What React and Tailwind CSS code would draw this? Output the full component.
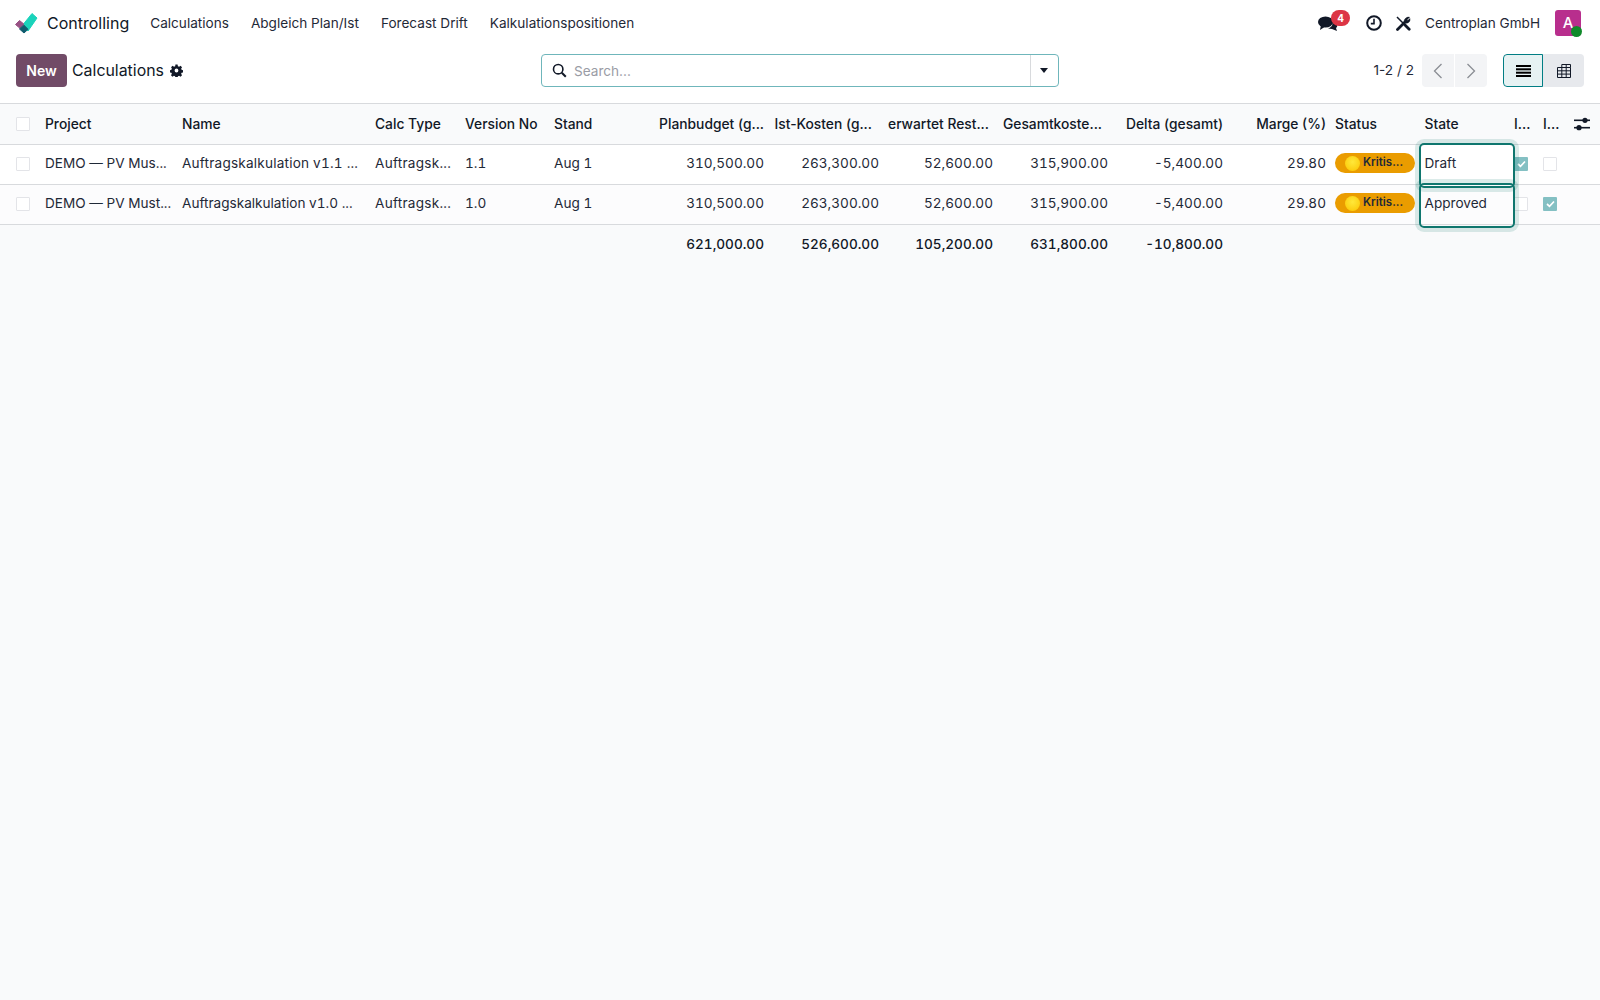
import React from "react";

const font = { fontFamily: "Inter, 'Noto Sans', sans-serif" };

function Logo() {
  return (
    <svg width="24" height="22" viewBox="0 0 24 22">
      <path d="M8.5 12 L17 1.5 L22 6 L13 19 Z" fill="#1ad3bb" stroke="#1ad3bb" strokeWidth="1" strokeLinejoin="round" />
      <path d="M0.5 12.5 L4.5 8.5 L8.8 12 L5 16.3 Z" fill="#985184" stroke="#985184" strokeWidth="1" strokeLinejoin="round" />
      <path d="M4.5 17 L8.8 13 L13 17.3 L9 21 Z" fill="#0f5c6e" stroke="#0f5c6e" strokeWidth="1" strokeLinejoin="round" />
    </svg>
  );
}

function Check({ on }) {
  return on ? (
    <span className="flex h-[14px] w-[14px] items-center justify-center rounded-[1px] bg-[#84c0c3]">
      <svg width="9" height="8" viewBox="0 0 9 8"><path d="M1 4 L3.5 6.3 L8 1.5" fill="none" stroke="#fff" strokeWidth="1.7" /></svg>
    </span>
  ) : (
    <span className="block h-[14px] w-[14px] rounded-[1px] border border-[#e3e4e8] bg-white" />
  );
}

function Badge() {
  return (
    <span className="flex h-[20px] w-[80px] items-center rounded-full bg-[#ea9c00] pl-[10px] text-[11.5px] font-semibold text-[#1f2937]">
      <span className="mr-[3px] h-[15px] w-[15px] rounded-full bg-[radial-gradient(circle_at_50%_40%,#ffe83a,#fbc400)]" />
      Kritis...
    </span>
  );
}

const cols = [37, 137, 193, 90, 89, 91, 135, 115, 114, 115, 115, 96, 89.5, 97.5, 29, 29, 28];
const rows = [
  { p: "DEMO — PV Mus...", n: "Auftragskalkulation v1.1 ...", wide: "tracking-[0.2px]", v: "1.1", s: "Draft", a: true, b: false },
  { p: "DEMO — PV Must...", n: "Auftragskalkulation v1.0 ...", wide: "", v: "1.0", s: "Approved", a: false, b: true },
];
const nums = ["310,500.00", "263,300.00", "52,600.00", "315,900.00", "-5,400.00"];
const th = "px-2 pt-[2px] h-[40px] text-[13.8px] font-medium text-[#111827] whitespace-nowrap overflow-hidden";
const td = "px-2 pb-[1px] h-[40px] whitespace-nowrap [font-variant-numeric:tabular-nums]";

export default function App() {
  return (
    <div style={font} className="flex min-h-[1000px] flex-col bg-[#f9fafb] text-[13.6px] text-[#1f2937]">
      <header className="flex h-[46px] items-center bg-white pl-[15px] pr-[19px]">
        <Logo />
        <span className="ml-[8px] text-[16px] text-[#111827]">Controlling</span>
        <nav className="ml-[21px] flex gap-[22px]">
          <span>Calculations</span>
          <span>Abgleich Plan/Ist</span>
          <span>Forecast Drift</span>
          <span>Kalkulationspositionen</span>
        </nav>
        <div className="ml-auto flex items-center">
          <span className="relative mr-[28px] flex">
            <svg width="20" height="18" viewBox="0 0 20 18" fill="#111827">
              <ellipse cx="7.5" cy="8" rx="7.5" ry="5.5" />
              <path d="M3 11 L2 16 L8 12 Z" />
              <path d="M14 8 C18 8 20 10 19 13 L18 14 L19 17 L14 15 L10 14.5 C14 13 15 11 14 8 Z" />
            </svg>
            <span className="absolute left-[13px] top-[-4px] flex h-[16px] w-[19px] items-center justify-center rounded-full bg-[#dc3545] text-[10px] font-bold text-white">4</span>
          </span>
          <svg className="mr-[14px]" width="16" height="16" viewBox="0 0 16 16" fill="none" stroke="#111827">
            <circle cx="8" cy="8" r="6.8" strokeWidth="2" />
            <path d="M8 3.8 V8.6 H4.8" strokeWidth="1.6" />
          </svg>
          <svg className="mr-[14px]" width="15" height="15" viewBox="0 0 15 15" fill="none" stroke="#111827">
            <path d="M1.5 13.5 L8.5 6.5" strokeWidth="2.8" strokeLinecap="round" />
            <path d="M1 1 L13 13" strokeWidth="1.5" />
            <path d="M9 9 L13.2 13.2" strokeWidth="2.8" strokeLinecap="round" />
            <path d="M8 7 C7.6 3.4 10.2 0.6 13.6 1.2 L11.3 3.5 L11.7 4.6 L13.9 2.4 C14.8 5.6 12 8 8 7 Z" fill="#111827" strokeWidth="0.4" />
          </svg>
          <span className="mr-[15px]">Centroplan GmbH</span>
          <span className="relative flex h-[26px] w-[26px] items-center justify-center rounded-[3px] bg-[#b82e8d] text-[15px] font-medium text-white">
            A
            <span className="absolute bottom-[-1px] right-[-1px] h-[11px] w-[11px] rounded-full bg-[#0f8a2a]" />
          </span>
        </div>
      </header>
      <section className="relative flex h-[58px] items-start border-b border-[#d8dadd] bg-white pl-[16px] pr-[16px] pt-[8px]">
        <button className="h-[33px] w-[51px] rounded-[4px] bg-[#714b67] text-[14px] font-semibold text-white">New</button>
        <span className="ml-[5px] mt-[5px] text-[15.9px] leading-[23px] text-[#111827]">Calculations</span>
        <svg className="ml-[6px] mt-[10px]" width="13" height="13" viewBox="0 0 24 24" fill="#111827">
          <path fillRule="evenodd" d="M10 1 h4 l.6 3 a8 8 0 0 1 2.2 .9 l2.6-1.7 2.8 2.8-1.7 2.6 a8 8 0 0 1 .9 2.2 l3 .6 v4 l-3 .6 a8 8 0 0 1-.9 2.2 l1.7 2.6-2.8 2.8-2.6-1.7 a8 8 0 0 1-2.2 .9 l-.6 3 h-4 l-.6-3 a8 8 0 0 1-2.2-.9 l-2.6 1.7-2.8-2.8 1.7-2.6 a8 8 0 0 1-.9-2.2 l-3-.6 v-4 l3-.6 a8 8 0 0 1 .9-2.2 L2 6 l2.8-2.8 2.6 1.7 a8 8 0 0 1 2.2-.9 Z M12 8.5 a3.5 3.5 0 1 0 0 7 a3.5 3.5 0 1 0 0-7 Z" />
        </svg>
        <div className="ml-[358px] flex h-[33px] w-[518px] items-center rounded-[4px] border border-[#6fb6bb] bg-white">
          <svg className="ml-[10px]" width="15" height="15" viewBox="0 0 15 15" fill="none" stroke="#111827" strokeWidth="1.6">
            <circle cx="6.2" cy="6.2" r="4.7" />
            <path d="M9.8 9.8 L13.8 13.8" strokeWidth="2" />
          </svg>
          <span className="ml-[7px] mt-[1px] text-[#9a9ca5]">Search...</span>
          <span className="ml-auto flex h-full w-[28px] items-center justify-center border-l border-[#d8dadd]">
            <span className="h-0 w-0 border-x-[4.5px] border-t-[5px] border-x-transparent border-t-[#111827]" />
          </span>
        </div>
        <div className="ml-auto flex items-center">
          <span className="mr-[8px]">1-2 / 2</span>
          <div className="flex h-[33px] w-[65px] overflow-hidden rounded-[4px]">
            <span className="flex flex-1 items-center justify-center bg-[#f3f4f6]">
              <svg width="10" height="16" viewBox="0 0 10 16" fill="none" stroke="#8a8d94" strokeWidth="1.3"><path d="M8.5 1 L1.5 8 L8.5 15" /></svg>
            </span>
            <span className="ml-[1px] flex flex-1 items-center justify-center bg-[#f3f4f6]">
              <svg width="10" height="16" viewBox="0 0 10 16" fill="none" stroke="#8a8d94" strokeWidth="1.3"><path d="M1.5 1 L8.5 8 L1.5 15" /></svg>
            </span>
          </div>
          <div className="ml-[16px] flex h-[33px] w-[81px] overflow-hidden rounded-[4px] bg-[#e7e9ed]">
            <span className="flex w-[40px] items-center justify-center rounded-l-[4px] border border-[#017e84] bg-[#e6f2f3]">
              <svg width="15" height="12" viewBox="0 0 15 12" fill="#000"><rect y="0" width="15" height="2" /><rect y="3.3" width="15" height="2" /><rect y="6.7" width="15" height="2" /><rect y="10" width="15" height="2" /></svg>
            </span>
            <span className="flex flex-1 items-center justify-center">
              <svg width="14" height="14" viewBox="0 0 14 14" fill="none" stroke="#111827" strokeWidth="1"><path d="M.5 3.5 H13.5 V13.5 H.5 Z M.5 6.8 H13.5 M.5 10.1 H13.5 M4.8 3.5 V13.5 M9.2 .5 V13.5 M4.8 .5 H13.5 V3.5 M4.8 .5 V3.5" /></svg>
            </span>
          </div>
        </div>
      </section>
      <table className="w-full table-fixed border-collapse text-left">
        <colgroup>
          {cols.map((w, i) => <col key={i} style={{ width: w }} />)}
        </colgroup>
        <thead>
          <tr className="border-b border-[#d8dadd]">
            <th className={th + " !px-0 !pt-0"}><span className="ml-[16px] block w-[14px]"><Check /></span></th>
            <th className={th}>Project</th>
            <th className={th}>Name</th>
            <th className={th}>Calc Type</th>
            <th className={th}>Version No</th>
            <th className={th}>Stand</th>
            <th className={th + " text-right"}>Planbudget (g...</th>
            <th className={th + " text-right !pl-0 !pr-[15px]"}>Ist-Kosten (g...</th>
            <th className={th + " text-right !pl-0 !pr-[12px]"}>erwartet Rest...</th>
            <th className={th + " text-right !pl-0 !pr-[14px]"}>Gesamtkoste...</th>
            <th className={th + " text-right !pl-0"}>Delta (gesamt)</th>
            <th className={th + " text-right !pr-[1px]"}>Marge (%)</th>
            <th className={th}>Status</th>
            <th className={th}>State</th>
            <th className={th + " !px-0"}>I...</th>
            <th className={th + " !px-0"}>I...</th>
            <th className="px-0 pr-[10px] text-right">
              <svg className="ml-auto" width="16" height="14" viewBox="0 0 16 14" fill="#111827">
                <rect y="2.5" width="16" height="1.6" /><circle cx="11" cy="3.3" r="2.6" />
                <rect y="9.9" width="16" height="1.6" /><circle cx="5" cy="10.7" r="2.6" />
              </svg>
            </th>
          </tr>
        </thead>
        <tbody>
          {rows.map((r, i) => (
            <tr key={r.v} className={(i === 0 ? "bg-white" : "bg-[#fcfcfd]") + " border-b border-[#d8dadd]"}>
              <td className="pb-[1px] pl-[16px]"><Check /></td>
              <td className={td}>{r.p}</td>
              <td className={td + " " + r.wide}>{r.n}</td>
              <td className={td + " tracking-[0.25px]"}>Auftragsk...</td>
              <td className={td}>{r.v}</td>
              <td className={td}>Aug 1</td>
              {nums.map((n) => <td key={n} className={td + " text-right"}>{n}</td>)}
              <td className={td + " text-right !pr-[1px]"}>29.80</td>
              <td className="px-2 pb-[2px]"><Badge /></td>
              <td className={td + " relative"}>
                {r.s}
                <span className="pointer-events-none absolute left-[2px] right-[-1px] top-[-2px] bottom-[-4px] rounded-[5px] border-2 border-[#0f766e] shadow-[0_0_0_4px_rgba(15,118,110,0.15)]" />
              </td>
              <td className="pb-[1px]"><Check on={r.a} /></td>
              <td className="pb-[1px]"><Check on={r.b} /></td>
              <td />
            </tr>
          ))}
          <tr>
            <td colSpan={6} />
            {["621,000.00", "526,600.00", "105,200.00", "631,800.00", "-10,800.00"].map((n) => (
              <td key={n} className={td + " text-right font-medium text-[#111827]"}>{n}</td>
            ))}
            <td colSpan={6} />
          </tr>
        </tbody>
      </table>
    </div>
  );
}
